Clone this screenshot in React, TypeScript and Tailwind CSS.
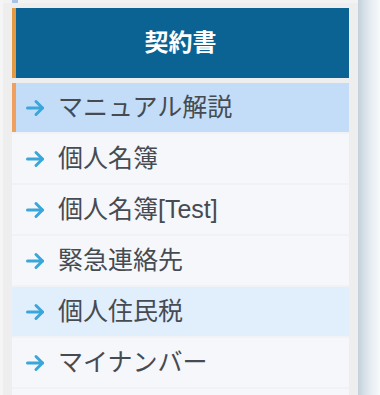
const items = [
  { label: "マニュアル解説", active: true },
  { label: "個人名簿" },
  { label: "個人名簿[Test]" },
  { label: "緊急連絡先" },
  { label: "個人住民税", hover: true },
  { label: "マイナンバー" },
  { label: "" },
];

function Arrow() {
  return (
    <svg width="20" height="20" viewBox="0 0 20 20" fill="none" stroke="#3aa6d9" strokeWidth="3" strokeLinecap="round" strokeLinejoin="round">
      <path d="M2.5 10h15" />
      <path d="M11 3.5l6.5 6.5-6.5 6.5" />
    </svg>
  );
}

export default function App() {
  return (
    <div
      className="w-[380px] h-[395px] overflow-hidden flex bg-[#f4f4f4]"
      style={{ fontFamily: '"Liberation Sans", "Noto Sans CJK JP", sans-serif' }}
    >
      <div className="w-[3px] shrink-0 bg-[#f5f5f5]" />
      <div className="w-[355px] shrink-0 bg-[#eeeeee] flex flex-col overflow-hidden pl-[9px] pr-[9px]">
        <div className="h-[3px] shrink-0 flex bg-[#f3f3f3] -mx-[9px] pl-[9px]">
          <div className="w-[6px] bg-[#a9c3e6]" />
        </div>
        <div className="h-[5px] shrink-0" />
        <div className="h-[70px] shrink-0 bg-[#0b6394] border-l-4 border-[#e39a42] flex items-center justify-center">
          <span className="text-white font-bold text-[24px] -ml-1 leading-none">契約書</span>
        </div>
        <div className="h-[5px] shrink-0" />
        <div className="flex flex-col gap-[2px] shrink-0 bg-[#f0f2f5]">
          {items.map((it, i) => (
            <div
              key={i}
              className={
                "h-[49px] flex items-center shrink-0 " +
                (it.active
                  ? "bg-[#c3ddf8] border-l-4 border-[#f0a05e] pl-[9px]"
                  : it.hover
                  ? "bg-[#e1eefc] pl-[13px]"
                  : "bg-[#f5f7fb] pl-[13px]")
              }
            >
              {it.label && (
                <>
                  <Arrow />
                  <span className="ml-[13px] text-[25px] text-[#464b52] leading-none">{it.label}</span>
                </>
              )}
            </div>
          ))}
        </div>
      </div>
      <div className="flex-1 bg-gradient-to-r from-[#c2d1da] via-[#e3eaef] to-[#f8fafb]" />
    </div>
  );
}
